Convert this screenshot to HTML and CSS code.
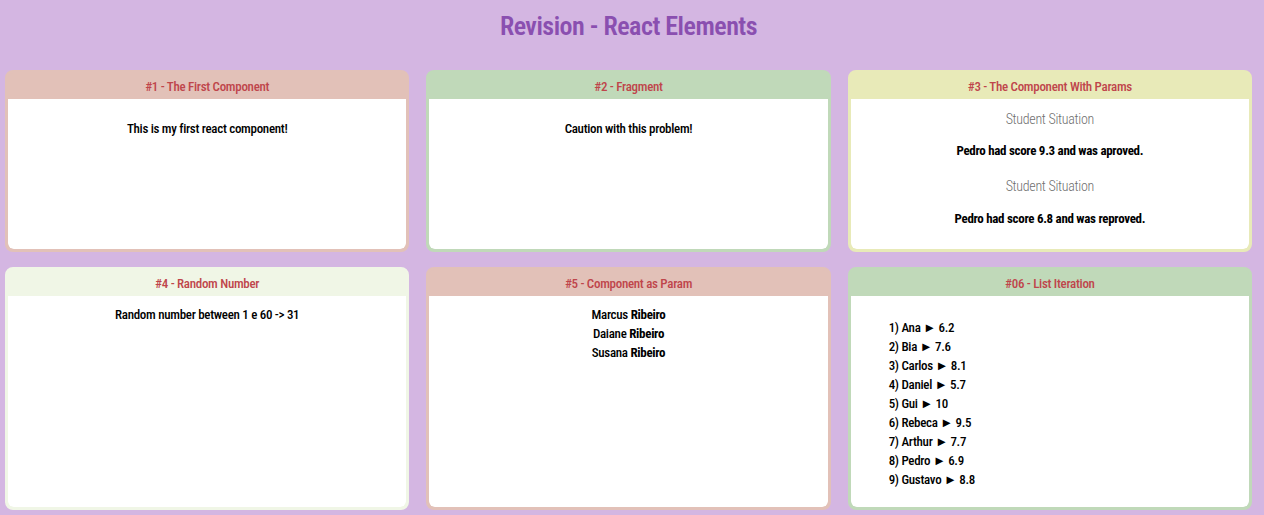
FILE: index.html
```html
<!DOCTYPE html>
<html>

<head>
	<link rel="stylesheet" href="styles.css">
</head>

<body>
	<h1 class="title">Revision - React Elements</h1>
	<div class="cards">
		<div class="card rose">
			<div class="card-title">#1 - The First Component</div>
			<div class="card-body">
				<p class="lead">This is my first react component!</p>
			</div>
		</div>
		<div class="card green">
			<div class="card-title">#2 - Fragment</div>
			<div class="card-body">
				<p class="lead">Caution with this problem!</p>
			</div>
		</div>
		<div class="card yellow">
			<div class="card-title">#3 - The Component With Params</div>
			<div class="card-body">
				<h2 class="situation">Student Situation</h2>
				<p class="score">Pedro had score 9.3 and was aproved.</p>
				<h2 class="situation">Student Situation</h2>
				<p class="score">Pedro had score 6.8 and was reproved.</p>
			</div>
		</div>
		<div class="card mint">
			<div class="card-title">#4 - Random Number</div>
			<div class="card-body">
				<p class="random">Random number between 1 e 60 -&gt; 31</p>
			</div>
		</div>
		<div class="card rose">
			<div class="card-title">#5 - Component as Param</div>
			<div class="card-body">
				<div class="family">
					<div>Marcus <b>Ribeiro</b></div>
					<div>Daiane <b>Ribeiro</b></div>
					<div>Susana <b>Ribeiro</b></div>
				</div>
			</div>
		</div>
		<div class="card green">
			<div class="card-title">#06 - List Iteration</div>
			<div class="card-body">
				<ul class="students">
					<li>1) Ana &#9658; 6.2</li>
					<li>2) Bia &#9658; 7.6</li>
					<li>3) Carlos &#9658; 8.1</li>
					<li>4) Daniel &#9658; 5.7</li>
					<li>5) Gui &#9658; 10</li>
					<li>6) Rebeca &#9658; 9.5</li>
					<li>7) Arthur &#9658; 7.7</li>
					<li>8) Pedro &#9658; 6.9</li>
					<li>9) Gustavo &#9658; 8.8</li>
				</ul>
			</div>
		</div>
	</div>
</body>

</html>
```

FILE: styles.css
```css
body {
	font-family: Roboto, 'Open Sans', 'Liberation Sans', sans-serif;
	font-stretch: 75%;
	background-color: #d4b6e2;
	color: #000;
	margin: 0;
	padding: 0 12px 0 5px;
}

.title {
	margin: 0;
	padding: 11px 0 0;
	height: 58px;
	box-sizing: border-box;
	text-align: center;
	font-size: 26px;
	font-weight: 600;
	letter-spacing: -0.5px;
	color: #8a4fb0;
}

.cards {
	display: grid;
	grid-template-columns: repeat(3, 1fr);
	column-gap: 17px;
	row-gap: 15px;
	padding-top: 12px;
}

.card {
	display: flex;
	flex-direction: column;
	border: 3px solid;
	border-radius: 8px;
	overflow: hidden;
}

.card-title {
	height: 26px;
	line-height: 27px;
	text-align: center;
	font-size: 13px;
	font-weight: 500;
	letter-spacing: -0.3px;
	color: #bf454b;
}

.card-body {
	flex: 1;
	background-color: #fff;
	border-radius: 0 0 6px 6px;
	text-align: center;
	font-size: 13px;
	font-weight: 500;
	letter-spacing: -0.3px;
}

.rose {
	border-color: #e2c1b8;
	background-color: #e2c1b8;
}

.green {
	border-color: #c0d9b9;
	background-color: #c0d9b9;
}

.yellow {
	border-color: #e8eab8;
	background-color: #e8eab8;
}

.mint {
	border-color: #f0f6e6;
	background-color: #f0f6e6;
}

.lead {
	margin: 22px 0 0;
}

.situation {
	margin: 12px 0 0;
	font-size: 14px;
	font-weight: 300;
	color: #6f6f6f;
}

.score {
	margin: 16px 0 0;
	line-height: 15px;
	font-weight: 700;
}

.score + .situation {
	margin-top: 20px;
}

.score:last-child {
	margin: 17px 0 23px;
}

.random {
	margin: 11px 0 0;
}

.family {
	margin-top: 9px;
	line-height: 19px;
}

.family b {
	font-weight: 700;
}

.students {
	list-style: none;
	margin: 22px 0 18px;
	padding: 0 0 0 38px;
	text-align: left;
	line-height: 19px;
}
```
